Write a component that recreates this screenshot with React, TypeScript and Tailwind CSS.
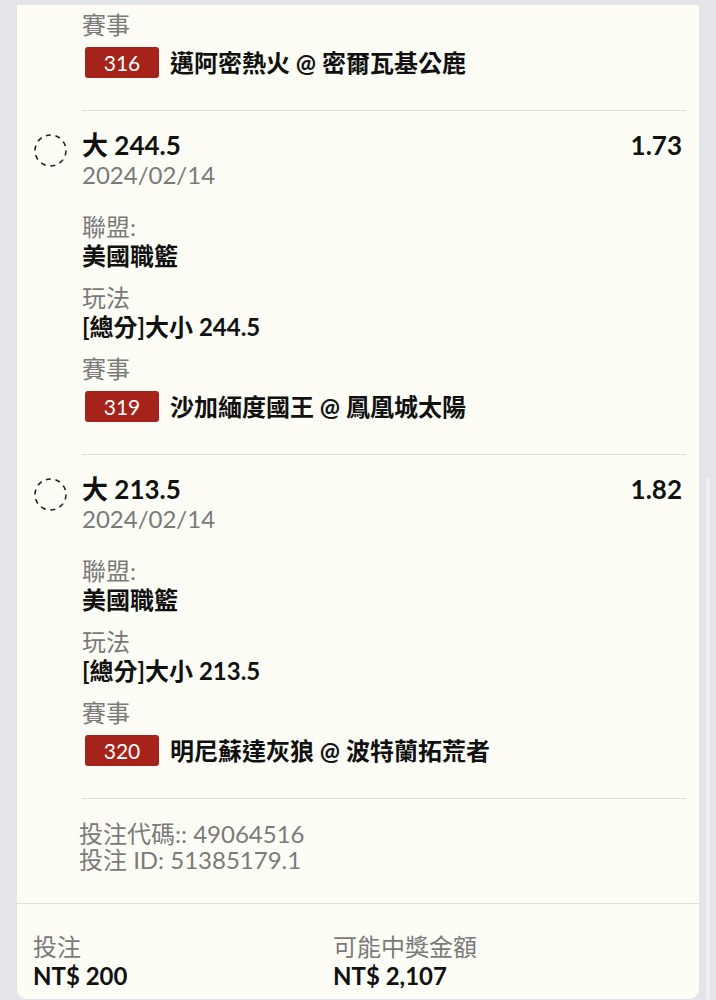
const FONT = "font-['Lato','Noto_Sans_CJK_TC',sans-serif]";

type Bet = {
  title: string;
  date: string;
  odds: string;
  league: string;
  market: string;
  code: string;
  match: string;
};

const bets: Bet[] = [
  {
    title: "大 244.5",
    date: "2024/02/14",
    odds: "1.73",
    league: "美國職籃",
    market: "[總分]大小 244.5",
    code: "319",
    match: "沙加緬度國王 @ 鳳凰城太陽",
  },
  {
    title: "大 213.5",
    date: "2024/02/14",
    odds: "1.82",
    league: "美國職籃",
    market: "[總分]大小 213.5",
    code: "320",
    match: "明尼蘇達灰狼 @ 波特蘭拓荒者",
  },
];

function DashedCircle() {
  return (
    <svg width="35" height="35" viewBox="0 0 35 35" className="shrink-0">
      <circle
        cx="17.5"
        cy="17.5"
        r="15.5"
        fill="none"
        stroke="#222"
        strokeWidth="1.6"
        strokeDasharray="5 4.7"
      />
    </svg>
  );
}

function Match({ code, match }: { code: string; match: string }) {
  return (
    <>
      <div className="mt-[13px] text-[24px] leading-[29px] text-[#7a7a7a]">賽事</div>
      <div className="mt-[8px] flex items-center">
        <span className="ml-[3px] flex h-[31px] w-[74px] items-center justify-center rounded-[3px] bg-[#a6231b] text-[21px] text-white">
          {code}
        </span>
        <span className="ml-[11px] text-[24px] font-bold leading-[29px] text-[#111]">{match}</span>
      </div>
    </>
  );
}

export default function App() {
  return (
    <div className={`min-h-screen bg-[#e4e5e9] px-[17px] pt-[5px] pb-[5px] ${FONT}`}>
      <div className="rounded-b-[10px] bg-[#fdfdf6]">
        {/* Tail of previous selection */}
        <div className="pl-[65px] pr-[13px]">
          <div className="border-b border-[#dededa] pb-[32px] pt-[5px]">
            <div className="-mt-[13px]" />
            <Match code="316" match="邁阿密熱火 @ 密爾瓦基公鹿" />
          </div>
        </div>

        {bets.map((b) => (
          <div key={b.code} className="flex pl-[16px] pr-[13px]">
            <div className="w-[49px] pt-[22px]">
              <DashedCircle />
            </div>
            <div className="flex-1 border-b border-[#dededa] pb-[32px] pt-[19px] pr-[4px]">
              <div className="flex items-start justify-between">
                <div className="text-[26px] font-bold leading-[30px] text-[#111]">{b.title}</div>
                <div className="text-[26px] font-bold leading-[30px] text-[#111]">{b.odds}</div>
              </div>
              <div className="text-[24px] leading-[30px] text-[#7a7a7a]">{b.date}</div>

              <div className="mt-[22px] text-[24px] leading-[29px] text-[#7a7a7a]">聯盟:</div>
              <div className="text-[24px] font-bold leading-[29px] text-[#111]">{b.league}</div>

              <div className="mt-[13px] text-[24px] leading-[29px] text-[#7a7a7a]">玩法</div>
              <div className="text-[24px] font-bold leading-[29px] text-[#111]">{b.market}</div>

              <Match code={b.code} match={b.match} />
            </div>
          </div>
        ))}

        {/* Bet codes */}
        <div className="border-b border-[#dededa] pl-[62px] pt-[22px] pb-[30px] text-[24px] leading-[26px] text-[#7a7a7a]">
          <div>投注代碼:: 49064516</div>
          <div>投注 ID: 51385179.1</div>
        </div>

        {/* Totals */}
        <div className="flex px-[16px] pt-[28px] pb-[9px] text-[24px] leading-[29px]">
          <div className="w-[300px]">
            <div className="text-[#7a7a7a]">投注</div>
            <div className="font-bold text-[#111]">NT$ 200</div>
          </div>
          <div>
            <div className="text-[#7a7a7a]">可能中獎金額</div>
            <div className="font-bold text-[#111]">NT$ 2,107</div>
          </div>
        </div>
      </div>

      {/* scrollbar thumb */}
      <div className="fixed right-[6px] top-[478px] bottom-0 w-[4px] rounded-full bg-[#eff0f3]" />
    </div>
  );
}
